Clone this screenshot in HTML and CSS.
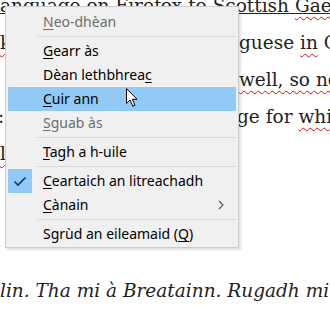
FILE: index.html
```html
<!DOCTYPE html>
<html lang="gd">

<head>
    <meta charset="UTF-8">
    <meta name="viewport" content="width=device-width, initial-scale=1.0">
    <title>Clàr-taice</title>
    <link rel="stylesheet" href="styles.css">
</head>

<body>

    <div class="page">
        <div class="row first">
            <span class="link">anguage on Firefox to Scottish <span class="typo">Gael</span>ic</span>
        </div>
        <div class="row">
            <span class="left"><span class="typo">k</span></span>
            <span class="right">guese <span class="typo">in</span> C</span>
        </div>
        <div class="row">
            <span class="left"></span>
            <span class="right"><span class="typo">well, so no</span></span>
        </div>
        <div class="row">
            <span class="left shift">:</span>
            <span class="right">ge for <span class="typo">whic</span></span>
        </div>
        <div class="row">
            <span class="left"><span class="typo">l</span></span>
        </div>
        <p class="quote">lin. Tha mi à Breatainn. Rugadh mi</p>
    </div>

    <!-- context menu sits over the page text -->
    <ul class="menu">
        <li class="item disabled"><u>N</u>eo-dhèan</li>
        <li class="sep"></li>
        <li class="item"><u>G</u>earr às</li>
        <li class="item">Dèan lethbhrea<u>c</u></li>
        <li class="item active"><u>C</u>uir ann</li>
        <li class="item disabled"><u>S</u>guab às</li>
        <li class="sep"></li>
        <li class="item"><u>T</u>agh a h-uile</li>
        <li class="sep"></li>
        <li class="item checked">
            <span class="check">
                <svg width="24" height="24" viewBox="0 0 24 24">
                    <polyline points="6.5,12.5 10,16 17.5,8.5" fill="none" stroke="#1d3551" stroke-width="1.6" />
                </svg>
            </span>
            <u>C</u>eartaich an litreachadh
        </li>
        <li class="item sub"><u>C</u>ànain
            <svg class="chev" width="8" height="10" viewBox="0 0 8 10">
                <polyline points="2,1 6,5 2,9" fill="none" stroke="#555" stroke-width="1.1" />
            </svg>
        </li>
        <li class="sep"></li>
        <li class="item">Sgrùd an eileamaid (<u>Q</u>)</li>
    </ul>

    <svg class="cursor" width="14" height="21" viewBox="0 0 14 21">
        <path d="M1.5 1.5 L1.5 16.5 L5 13 L7.8 19.2 L10 18.2 L7.3 12.3 L12 12.3 Z" fill="#fff" stroke="#000" stroke-width="1" stroke-linejoin="round" />
    </svg>

</body>

</html>
```

FILE: styles.css
```css
body {
    margin: 0;
    padding: 0;
    background: #fff;
    width: 330px;
    height: 317px;
    overflow: hidden;
    position: relative;
}

.page {
    font-family: "DejaVu Serif", "Liberation Serif", serif;
    font-size: 18.5px;
    color: #222;
}

.row {
    display: flex;
    height: 37px;
    line-height: 37px;
    white-space: nowrap;
    overflow: hidden;
}

.row.first {
    margin-top: -13px;
}

.link {
    text-decoration: underline;
    text-decoration-thickness: 1px;
}

.left {
    width: 239px;
    flex-shrink: 0;
}

.shift {
    margin-left: -2px;
}

.typo {
    text-decoration: underline wavy #d01010;
    text-decoration-thickness: 1px;
    text-decoration-skip-ink: none;
    text-underline-offset: 4px;
}

.quote {
    margin: 0;
    padding-top: 108px;
    font-style: italic;
    font-size: 18.5px;
    white-space: nowrap;
}

.menu {
    position: absolute;
    left: 5px;
    top: 6px;
    width: 228px;
    margin: 0;
    padding: 3px 2px 1px;
    list-style: none;
    background: #f0f0f0;
    border: 1px solid #cccccc;
    box-shadow: 2px 2px 2px rgba(0, 0, 0, 0.12);
    font-family: "Noto Sans", "Open Sans", sans-serif;
    font-size: 14px;
    color: #000;
}

.item {
    position: relative;
    height: 24px;
    line-height: 24px;
    padding-left: 35px;
}

.item u {
    text-underline-offset: 2px;
}

.item.disabled {
    color: #6d6d6d;
}

.item.active {
    background: #91c9f7;
}

.check {
    position: absolute;
    left: 0;
    top: 0;
    width: 24px;
    height: 24px;
    background: #91c9f7;
}

.check svg {
    display: block;
}

.chev {
    position: absolute;
    right: 11px;
    top: 7px;
}

.sep {
    height: 1px;
    margin: 2px 0 2px 29px;
    background: #d7d7d7;
}

.cursor {
    position: absolute;
    left: 125px;
    top: 87px;
}
```
